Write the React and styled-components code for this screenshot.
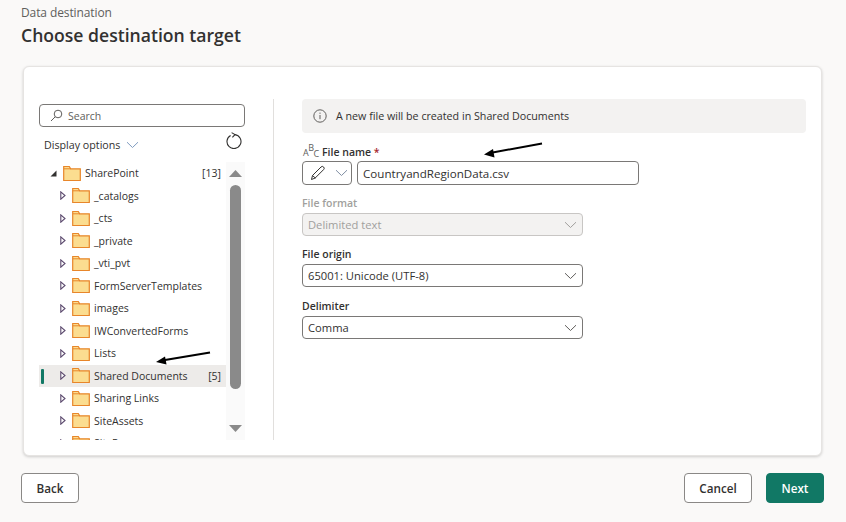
import React from "react";
import styled, { createGlobalStyle } from "styled-components";

const Global = createGlobalStyle`
  html, body { margin: 0; padding: 0; background: #faf9f8; overflow: hidden; }
  * { box-sizing: border-box; }
  body { font-family: "Open Sans", "Noto Sans", "Liberation Sans", sans-serif; color: #323130; }
`;

const Page = styled.div`
  width: 846px; height: 522px; position: relative;
  padding: 5px 22px 0 21px;
  display: flex; flex-direction: column;
`;
const Crumb = styled.div`font-size: 12px; line-height: 16px; color: #605e5c; letter-spacing: -0.1px;`;
const Title = styled.h1`
  margin: 2px 0 0; font-size: 17.6px; line-height: 24px; font-weight: 600; color: #323130;
`;
const Card = styled.div`
  margin: 19px 2px 0 2px; height: 390px; background: #fff; border-radius: 6px;
  border: 1px solid #e6e4e2; box-shadow: 0 1px 3px rgba(0,0,0,.18);
  display: flex; padding: 32px 15px 15px 15px;
`;
const Left = styled.div`width: 206px; flex: none; display: flex; flex-direction: column; padding-top: 5px; min-height: 0;`;
const Search = styled.div`
  height: 23px; border: 1px solid #7a7876; border-radius: 4px; display: flex; align-items: center; gap: 5px; padding-left: 10px;
  font-size: 10.5px; color: #605e5c; flex: none;
`;
const OptionsRow = styled.div`height: 35px; display: flex; align-items: center; justify-content: space-between; padding: 0 3px 0 5px; flex: none;`;
const Options = styled.div`display: flex; align-items: center; gap: 6px; font-size: 10.7px; color: #323130;`;
const RefreshIcon = styled.svg`margin-bottom: 9px; flex: none;`;
const TreeWrap = styled.div`flex: 1; min-height: 0; display: flex; overflow: hidden;`;
const Tree = styled.div`width: 187px; flex: none; overflow: hidden;`;
const Row = styled.div`
  height: 22.5px; display: flex; align-items: center; position: relative;
  padding-left: ${p => p.$root ? 11 : 20}px; padding-right: 5px;
  background: ${p => p.$selected ? "#edebe9" : "transparent"};
  font-size: 10.5px; color: #323130;
`;
const Marker = styled.span`position: absolute; left: 2px; top: 4px; width: 3px; height: 15px; background: #117865; border-radius: 1px;`;
const Caret = styled.span`width: 13px; flex: none; display: flex; align-items: center; justify-content: flex-start; padding-left: ${p => p.$root ? 0 : 1}px;`;
const Label = styled.span`margin-left: 4px; flex: 1; white-space: nowrap;`;
const Count = styled.span`color: #323130;`;
const Scroll = styled.div`
  width: 19px; flex: none; background: #fafafa; position: relative; display: flex; flex-direction: column; align-items: center;
  padding-top: 8px;
`;
const Thumb = styled.div`width: 11px; height: 204px; margin-top: 8px; background: #8a8a8a; border-radius: 6px;`;
const DownArrow = styled.div`margin-top: 36px; line-height: 0;`;
const Divider = styled.div`width: 1px; background: #e1dfdd; margin: 0 28px; flex: none;`;
const Right = styled.div`flex: 1; display: flex; flex-direction: column; min-width: 0;`;
const Info = styled.div`
  height: 34px; background: #f3f2f1; border-radius: 4px; display: flex; align-items: center; gap: 9px; padding-left: 11px;
  font-size: 10.7px; color: #323130; flex: none;
`;
const NameLabelRow = styled.div`display: flex; align-items: center; gap: 5px; margin-top: 11px; height: 16px; margin-left: 1px;`;
const AbcIcon = styled.svg`flex: none; overflow: visible; margin-top: -3px;`;
const FieldLabel = styled.div`
  font-size: 10.5px; line-height: 16px; font-weight: 600; color: ${p => p.$disabled ? "#a19f9d" : "#323130"};
`;
const Req = styled.span`color: #a4262c;`;
const NameRow = styled.div`display: flex; gap: 5px; margin-top: 1px; height: 24px;`;
const EditBtn = styled.div`
  width: 50px; border: 1px solid #7a7876; border-radius: 4px; display: flex; align-items: center; gap: 9px; padding-left: 7px; background: #fff;
`;
const TextBox = styled.div`
  width: 282px; border: 1px solid #7a7876; border-radius: 4px; display: flex; align-items: center; padding-left: 5px;
  font-size: 11.6px; color: #323130;
`;
const Field = styled.div`margin-top: ${p => p.$mt}px; display: flex; flex-direction: column; width: 281px;`;
const Select = styled.div`
  height: 23px; margin-top: 2px; border: 1px solid ${p => p.$disabled ? "#c8c6c4" : "#7a7876"}; border-radius: 4px;
  background: ${p => p.$disabled ? "#f3f2f1" : "#fff"}; color: ${p => p.$disabled ? "#a19f9d" : "#323130"};
  display: flex; align-items: center; justify-content: space-between; padding: 0 5px 0 5px; font-size: 11.2px;
`;
const Footer = styled.div`display: flex; justify-content: space-between; margin-top: 17px; gap: 14px;`;
const Actions = styled.div`display: flex; gap: 14px;`;
const Btn = styled.button`
  height: 30px; width: ${p => p.$w}px; border-radius: 4px; font: 600 11.7px "Open Sans", sans-serif;
  border: 1px solid ${p => p.$primary ? "#117865" : "#8a8886"};
  background: ${p => p.$primary ? "#117865" : "#fff"}; color: ${p => p.$primary ? "#fff" : "#323130"};
  padding: 0;
`;
const ArrowMark = styled.svg`position: absolute; left: ${p => p.$x}px; top: ${p => p.$y}px;`;

const Folder = () => (
  <svg width="18" height="17" viewBox="0 0 18 17" style={{ flex: "none" }}>
    <path d="M.7 15.5V1.5h5.6l1.4 2.3h9.6v11.7z" fill="#fbdd90" stroke="#e8862a" strokeWidth="1.2" />
    <path d="M.7 3.8h7" stroke="#e8862a" strokeWidth="1" />
  </svg>
);
const TreeCaret = () => (
  <svg width="6" height="9" viewBox="0 0 6 9"><path d="M.8.8l4.2 3.7L.8 8.2z" fill="#fff" stroke="#5c4a6e" strokeWidth="1.1" /></svg>
);
const OpenCaret = () => (
  <svg width="7" height="7" viewBox="0 0 7 7"><path d="M6.5.5v6H.5z" fill="#323130" /></svg>
);
const Chev = ({ c = "#605e5c" }) => (
  <svg width="13" height="8" viewBox="0 0 13 8" fill="none" style={{ flex: "none" }}><path d="M1 1.2l5.5 5.3L12 1.2" stroke={c} strokeWidth="1" /></svg>
);
const Arrow = ({ x, y, w, h, d, head }) => (
  <ArrowMark $x={x} $y={y} width={w} height={h} viewBox={`0 0 ${w} ${h}`}>
    <path d={d} stroke="#000" strokeWidth="2" fill="none" />
    <path d={head} fill="#000" />
  </ArrowMark>
);

const items = ["_catalogs", "_cts", "_private", "_vti_pvt", "FormServerTemplates", "images", "IWConvertedForms", "Lists", "Shared Documents", "Sharing Links", "SiteAssets", "SitePages"];

export default function App() {
  return (
    <Page>
      <Global />
      <Crumb>Data destination</Crumb>
      <Title>Choose destination target</Title>
      <Card>
        <Left>
          <Search>
            <svg width="13" height="13" viewBox="0 0 13 13" fill="none" stroke="#605e5c"><circle cx="8" cy="5" r="3.8" /><path d="M5.2 7.8L1 12" /></svg>
            Search
          </Search>
          <OptionsRow>
            <Options>Display options <Chev c="#7f9cc0" /></Options>
            <RefreshIcon width="16" height="17" viewBox="0 0 16 17" fill="none" stroke="#323130" strokeWidth="1.1">
              <path d="M4.6 3.4A7 7 0 1 0 9 2.6" />
              <path d="M5.6.6L9 2.6 6.4 5.4" />
            </RefreshIcon>
          </OptionsRow>
          <TreeWrap>
            <Tree>
              <Row $root>
                <Caret $root><OpenCaret /></Caret>
                <Folder />
                <Label>SharePoint</Label>
                <Count>[13]</Count>
              </Row>
              {items.map(t => (
                <Row key={t} $selected={t === "Shared Documents"}>
                  {t === "Shared Documents" && <Marker />}
                  <Caret><TreeCaret /></Caret>
                  <Folder />
                  <Label>{t}</Label>
                  {t === "Shared Documents" && <Count>[5]</Count>}
                </Row>
              ))}
            </Tree>
            <Scroll>
              <svg width="13" height="7" viewBox="0 0 13 7" style={{ flex: "none" }}><path d="M6.5 0L13 7H0z" fill="#8a8a8a" /></svg>
              <Thumb />
              <DownArrow><svg width="13" height="7" viewBox="0 0 13 7"><path d="M0 0h13L6.5 7z" fill="#8a8a8a" /></svg></DownArrow>
            </Scroll>
          </TreeWrap>
        </Left>
        <Divider />
        <Right>
          <Info>
            <svg width="14" height="14" viewBox="0 0 14 14" fill="none" stroke="#605e5c"><circle cx="7" cy="7" r="6.2" /><path d="M7 6v4.2M7 3.6v1.2" /></svg>
            A new file will be created in Shared Documents
          </Info>
          <NameLabelRow>
            <AbcIcon width="14" height="16" viewBox="0 0 14 16" fill="#605e5c" fontFamily="Open Sans, sans-serif" fontSize="9">
              <text x="0" y="13">A<tspan dx="-0.5" dy="-5">B</tspan><tspan dx="-0.5" dy="6">C</tspan></text>
            </AbcIcon>
            <FieldLabel>File name <Req>*</Req></FieldLabel>
          </NameLabelRow>
          <NameRow>
            <EditBtn>
              <svg width="16" height="16" viewBox="0 0 16 16" fill="none" stroke="#323130">
                <path d="M1.5 14.5l1-4L11 2a1.6 1.6 0 0 1 2.6 2.6L5.2 13z" />
                <path d="M2.5 10.5l3 2.7" />
              </svg>
              <Chev c="#7f8ea3" />
            </EditBtn>
            <TextBox>CountryandRegionData.csv</TextBox>
          </NameRow>
          <Field $mt={10}>
            <FieldLabel $disabled>File format</FieldLabel>
            <Select $disabled>Delimited text <Chev c="#a19f9d" /></Select>
          </Field>
          <Field $mt={10}>
            <FieldLabel>File origin</FieldLabel>
            <Select>65001: Unicode (UTF-8) <Chev /></Select>
          </Field>
          <Field $mt={11}>
            <FieldLabel>Delimiter</FieldLabel>
            <Select>Comma <Chev /></Select>
          </Field>
        </Right>
      </Card>
      <Footer>
        <Btn $w={58}>Back</Btn>
        <Actions>
          <Btn $w={68}>Cancel</Btn>
          <Btn $w={58} $primary>Next</Btn>
        </Actions>
      </Footer>
      <Arrow x={155} y={350} w={58} h={16} d="M55 2.5L7 10.5" head="M1 12L10 6.5l1.5 8z" />
      <Arrow x={483} y={141} w={62} h={18} d="M59 2.5L7 12" head="M1 13.5L10 8l1.5 8.5z" />
    </Page>
  );
}
